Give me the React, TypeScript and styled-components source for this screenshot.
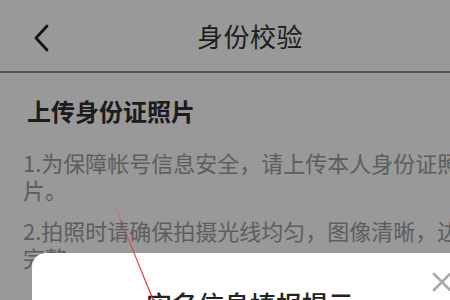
import styled, { createGlobalStyle } from "styled-components";

const GlobalStyle = createGlobalStyle`
    html,
    body {
        margin: 0;
        padding: 0;
        overflow: hidden;
        background: #ffffff;
    }
    body {
        font-family: "Noto Sans CJK SC", "Noto Sans", sans-serif;
    }
`;

// the phone page is 500px wide, the window only shows its left 450px
const Page = styled.div`
    position: relative;
    width: 500px;
    height: 300px;
    overflow: hidden;
    background: #ffffff;
`;

const Header = styled.header`
    height: 71px;
    display: flex;
    align-items: center;
    justify-content: center;
    position: relative;
    border-bottom: 2px solid #8a8a8a;
`;

const BackButton = styled.button`
    position: absolute;
    left: 28px;
    top: 22px;
    width: 26px;
    height: 32px;
    padding: 0;
    border: none;
    background: transparent;
    display: flex;
    align-items: center;
    justify-content: center;
`;

const HeaderTitle = styled.h1`
    margin: 0;
    font-size: 26px;
    font-weight: 400;
    color: #333333;
    letter-spacing: 0.5px;
`;

const Content = styled.main`
    padding: 21px 16px 0 23px;
`;

const SectionTitle = styled.h2`
    margin: 0 0 21px 4px;
    font-size: 24px;
    line-height: 34px;
    font-weight: 700;
    color: #303030;
`;

const Tip = styled.p`
    margin: 0 0 14px 0;
    font-size: 22px;
    line-height: 27px;
    color: #9c9c9c;
`;

const Overlay = styled.div`
    position: absolute;
    inset: 0;
    background: rgba(0, 0, 0, 0.4);
    padding: 253px 32px 0 32px;
`;

const Dialog = styled.section`
    position: relative;
    background: #ffffff;
    border-radius: 14px;
    height: 200px;
    padding-top: 33px;
`;

const DialogTitle = styled.h3`
    margin: 0;
    text-align: center;
    font-size: 26px;
    line-height: 36px;
    font-weight: 500;
    color: #222222;
`;

const CloseButton = styled.button`
    position: absolute;
    top: 18px;
    right: 15px;
    width: 22px;
    height: 22px;
    padding: 0;
    border: none;
    background: transparent;
`;

const Annotation = styled.svg`
    position: absolute;
    left: 0;
    top: 0;
    pointer-events: none;
`;

export default function App() {
    return (
        <>
            <GlobalStyle />
            <Page>
                <Header>
                    <BackButton aria-label="返回">
                        <svg width="18" height="28" viewBox="0 0 18 28">
                            <path
                                d="M15 2 L4 14 L15 26"
                                fill="none"
                                stroke="#222"
                                strokeWidth="2.8"
                                strokeLinecap="round"
                                strokeLinejoin="round"
                            />
                        </svg>
                    </BackButton>
                    <HeaderTitle>身份校验</HeaderTitle>
                </Header>
                <Content>
                    <SectionTitle>上传身份证照片</SectionTitle>
                    <Tip>1.为保障帐号信息安全，请上传本人身份证照片。</Tip>
                    <Tip>2.拍照时请确保拍摄光线均匀，图像清晰，边框完整。</Tip>
                </Content>
                <Overlay>
                    <Dialog>
                        <CloseButton aria-label="关闭">
                            <svg width="22" height="22" viewBox="0 0 22 22">
                                <path
                                    d="M3 3 L19 19 M19 3 L3 19"
                                    stroke="#a8a8a8"
                                    strokeWidth="2.6"
                                    strokeLinecap="round"
                                />
                            </svg>
                        </CloseButton>
                        <DialogTitle>实名信息填报提示</DialogTitle>
                    </Dialog>
                </Overlay>
                <Annotation width="500" height="300">
                    <defs>
                        <linearGradient id="redFade" x1="0" y1="0" x2="0" y2="1">
                            <stop offset="0" stopColor="#e03a3a" stopOpacity="0.15" />
                            <stop offset="0.4" stopColor="#e03a3a" stopOpacity="0.8" />
                            <stop offset="1" stopColor="#e02828" stopOpacity="1" />
                        </linearGradient>
                    </defs>
                    <path
                        d="M115 206 L158 312"
                        stroke="url(#redFade)"
                        strokeWidth="1.3"
                        fill="none"
                    />
                </Annotation>
            </Page>
        </>
    );
}
